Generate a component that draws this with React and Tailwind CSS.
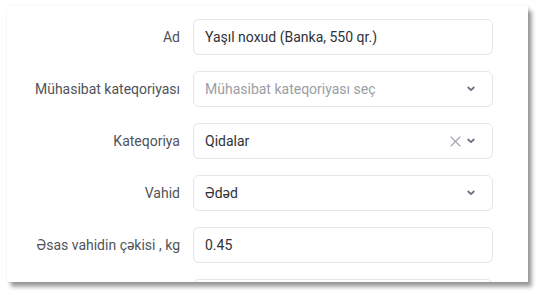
import React from "react";

function Chevron() {
	return (
		<svg width="8" height="6" viewBox="0 0 8 6" className="shrink-0">
			<path d="M1.2 1.5 L4 4.2 L6.8 1.5" fill="none" stroke="#6b7280" strokeWidth="1.8" strokeLinecap="round" strokeLinejoin="round" />
		</svg>
	);
}

function Cross() {
	return (
		<svg width="11" height="11" viewBox="0 0 11 11" className="shrink-0">
			<path d="M1 1 L10 10 M10 1 L1 10" fill="none" stroke="#a0a4ab" strokeWidth="1.1" strokeLinecap="round" />
		</svg>
	);
}

function Row({ label, value, placeholder, select, clearable }) {
	return (
		<div className="flex items-center gap-[13px]">
			<label className="w-[173px] shrink-0 text-right text-[14px] text-[#505359]">{label}</label>
			<div className="flex h-[36px] w-[300px] shrink-0 items-center rounded-[6px] border border-[#e3e5e8] bg-white pl-[11px] pr-[17px]">
				<span className={`flex-1 truncate text-[14px] ${placeholder ? "text-[#9a9ea5]" : "text-[#2f3237]"}`}>
					{value || placeholder}
				</span>
				{clearable ? (
					<span className="mr-[6px] flex items-center">
						<Cross />
					</span>
				) : null}
				{select ? <Chevron /> : null}
			</div>
		</div>
	);
}

export default function App() {
	const rows = [
		{ label: "Ad", value: "Yaşıl noxud (Banka, 550 qr.)" },
		{ label: "Mühasibat kateqoriyası", placeholder: "Mühasibat kateqoriyası seç", select: true },
		{ label: "Kateqoriya", value: "Qidalar", select: true, clearable: true },
		{ label: "Vahid", value: "Ədəd", select: true },
		{ label: "Əsas vahidin çəkisi , kg", value: "0.45" },
		{ label: "", value: "" },
	];

	return (
		<main className="h-[295px] w-[540px] overflow-hidden bg-white pl-[7px] pt-[6px]" style={{ fontFamily: "Roboto, 'Noto Sans', sans-serif" }}>
			<div className="h-[276px] w-[521px] overflow-hidden bg-white pt-[13px] shadow-[1px_1px_3px_rgba(0,0,0,0.15),4px_5px_4px_rgba(0,0,0,0.35)]">
				<div className="flex flex-col gap-[16px]">
					{rows.map((row, i) => (
						<Row key={i} {...row} />
					))}
				</div>
			</div>
		</main>
	);
}
